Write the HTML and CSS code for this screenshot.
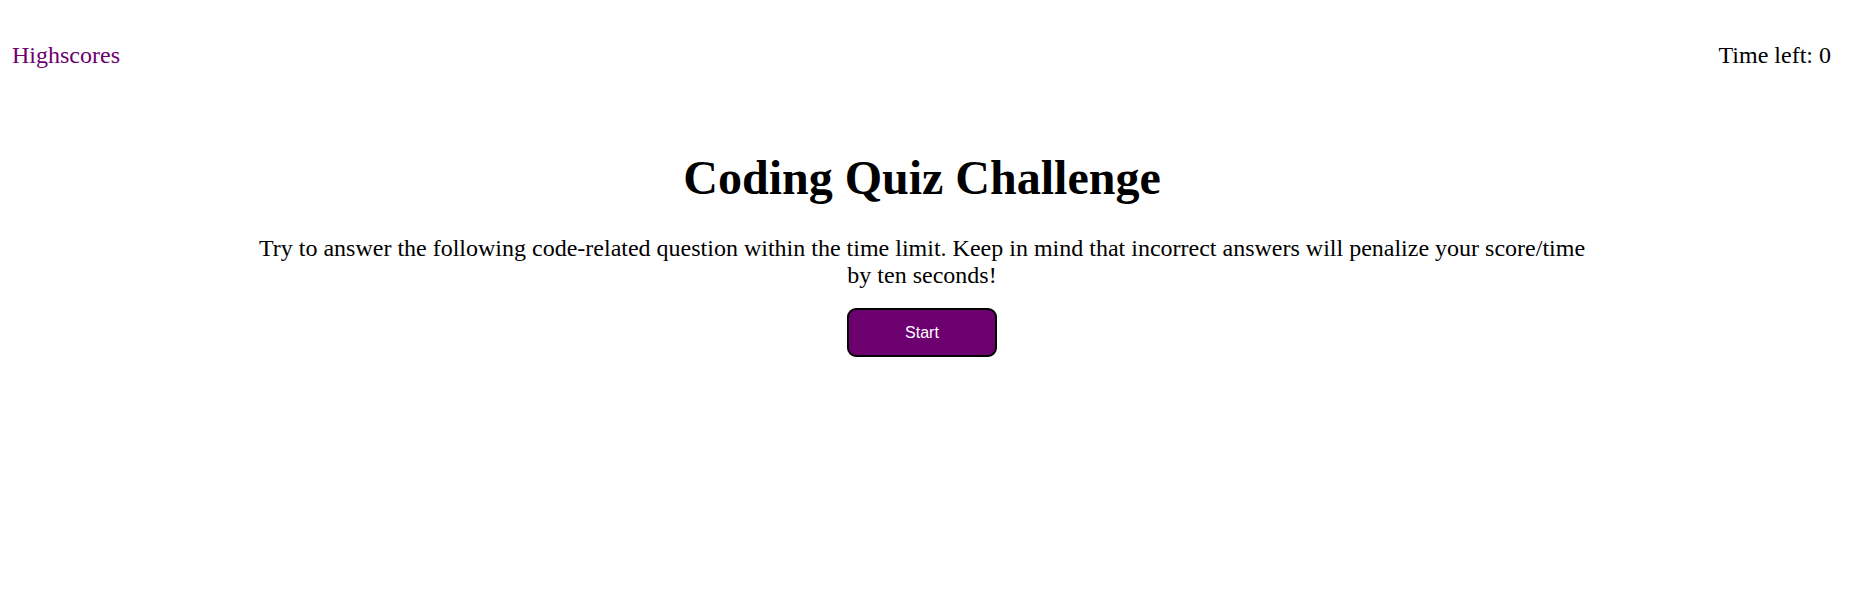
FILE: index.html
```html
<!DOCTYPE html>
<html lang="en">
<head>
<meta charset="utf-8">
<title>Coding Quiz Challenge</title>
<link rel="stylesheet" href="styles.css">
</head>
<body>
<header class="top-bar">
  <a class="highscores" href="#">Highscores</a>
  <div class="timer">Time left: <span class="time">0</span></div>
</header>
<main class="intro">
  <h1 class="title">Coding Quiz Challenge</h1>
  <p class="description">Try to answer the following code-related question within the time limit. Keep in mind that incorrect answers will penalize your score/time by ten seconds!</p>
  <button class="start-btn" type="button">Start</button>
</main>
</body>
</html>
```
FILE: styles.css
```css
html, body {
  background: #ffffff;
}
body {
  margin: 8px 25px 8px 8px;
  font-family: "Liberation Serif", "Times New Roman", serif;
  font-size: 24px;
  color: #000;
}
.top-bar {
  display: flex;
  justify-content: space-between;
  align-items: center;
  padding: 34px 5px 0 4px;
}
.highscores {
  color: #6c006f;
  text-decoration: none;
}
.intro {
  display: flex;
  flex-direction: column;
  align-items: center;
  text-align: center;
}
.title {
  font-size: 48px;
  margin: 81px 0 30px;
}
.description {
  width: 1330px;
  margin: 0 0 19px;
}
.start-btn {
  width: 150px;
  height: 49px;
  background: #6c006f;
  color: #ffffff;
  border: 2px solid #000;
  border-radius: 9px;
  font-family: "Liberation Sans", Arial, sans-serif;
  font-size: 16px;
}
```
